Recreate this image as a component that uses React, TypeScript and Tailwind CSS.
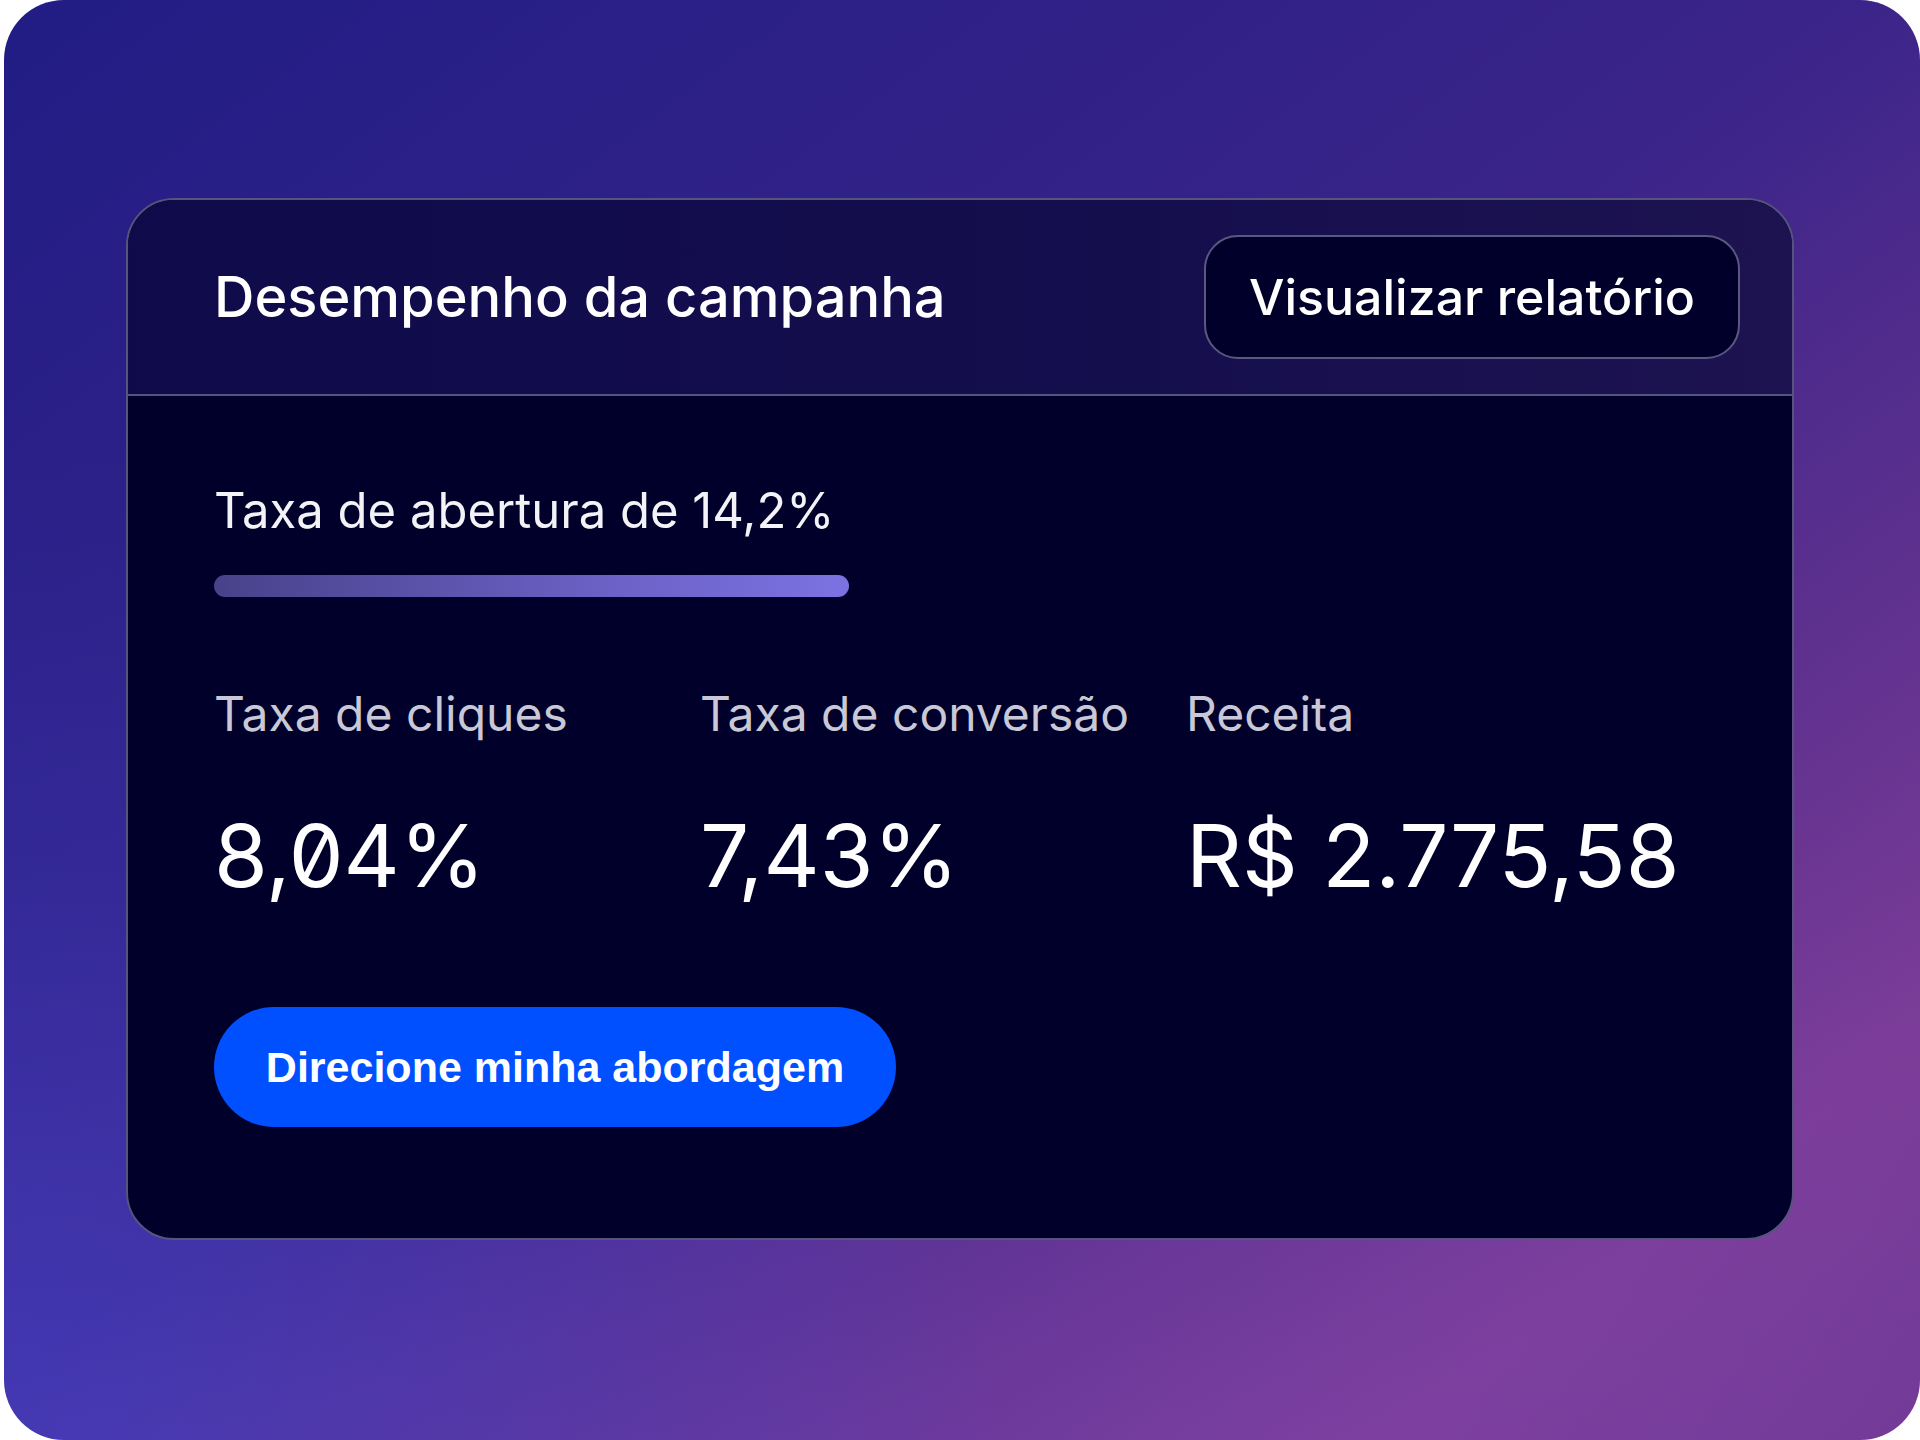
import React from "react";

export default function App() {
  return (
    <div className="w-[1920px] h-[1440px] bg-white pl-[4px] overflow-hidden">
      <div className="w-[1916px] h-[1440px] rounded-[60px] pt-[198px] pl-[122px] bg-[radial-gradient(circle_at_0%_100%,rgba(60,80,235,0.35)_0px,rgba(60,80,235,0)_1000px),linear-gradient(to_top,rgba(140,90,220,0.15)_0%,rgba(140,90,220,0)_40%),linear-gradient(to_bottom_right,#211d85_0%,#3a2489_48%,#5f318f_70%,#7b3c96_86%,#6e358c_100%)]">
        <div className="w-[1668px] h-[1042px] rounded-[48px] border-2 border-[#56547c] overflow-hidden bg-[#00002a] flex flex-col font-[Inter,sans-serif]">
          <div className="h-[196px] shrink-0 border-b-2 border-[#56547c] flex items-center justify-between pl-[86px] pr-[52px] bg-[linear-gradient(90deg,#0f0b4b_0%,#150e4d_60%,#1d1351_100%)]">
            <h1 className="text-[56px] leading-none font-medium text-white whitespace-nowrap">
              Desempenho da campanha
            </h1>
            <button className="w-[536px] h-[124px] rounded-[34px] border-2 border-[#5a5781] bg-[#00002a] flex items-center justify-center text-[50px] leading-none font-medium text-white whitespace-nowrap">
              Visualizar relatório
            </button>
          </div>
          <div className="flex-1 pl-[86px] pt-[90px]">
            <p className="text-[49px] leading-none text-[#f2f2f7] whitespace-nowrap">
              Taxa de abertura de 14,2%
            </p>
            <div className="mt-[40px] w-[635px] h-[22px] rounded-full bg-[linear-gradient(90deg,#48428a_0%,#6a60c4_60%,#7c72e2_100%)]" />
            <div className="mt-[93px] flex">
              {[
                ["Taxa de cliques", "8,04%"],
                ["Taxa de conversão", "7,43%"],
                ["Receita", "R$ 2.775,58"],
              ].map(([label, value]) => (
                <div key={label} className="w-[486px] shrink-0 flex flex-col">
                  <span className="text-[48px] leading-none text-[#c8c8d6] whitespace-nowrap">{label}</span>
                  <span className="mt-[74px] text-[87px] leading-none text-white slashed-zero whitespace-nowrap">
                    {value}
                  </span>
                </div>
              ))}
            </div>
            <button className="mt-[108px] w-[682px] h-[120px] rounded-full bg-[#0050ff] flex items-center justify-center text-white font-bold text-[43px] leading-none whitespace-nowrap font-['Liberation_Sans',Arial,sans-serif]">
              Direcione minha abordagem
            </button>
          </div>
        </div>
      </div>
    </div>
  );
}
